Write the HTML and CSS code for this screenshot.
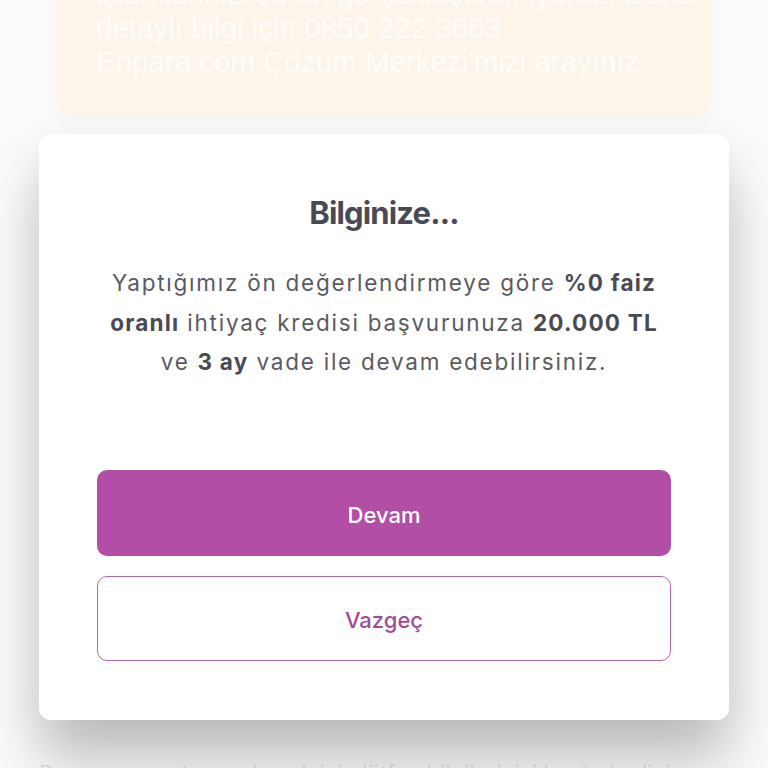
FILE: index.html
```html
<!DOCTYPE html>
<html lang="tr">
<head>
<meta charset="utf-8">
<link rel="stylesheet" href="styles.css">
</head>
<body>
<div class="page">
  <div class="notice">
    <p>işlemlerinizi şu an gerçekleştiremiyoruz. Daha</p>
    <p>detaylı bilgi için 0850 222 3663</p>
    <p>Enpara.com Çözüm Merkezi'mizi arayınız.</p>
  </div>
  <div class="modal">
    <h1 class="title">Bilginize...</h1>
    <p class="message">Yaptığımız ön değerlendirmeye göre <b>%0 faiz</b><br><b>oranlı</b> ihtiyaç kredisi başvurunuza <b>20.000 TL</b><br>ve <b>3 ay</b> vade ile devam edebilirsiniz.</p>
    <div class="actions">
      <button class="btn btn-primary">Devam</button>
      <button class="btn btn-outline">Vazgeç</button>
    </div>
  </div>
  <p class="below">Başvurunuzu tamamlamak için lütfen bilgilerinizi kontrol ediniz.</p>
</div>
</body>
</html>
```
FILE: styles.css
```css
html, body {
  margin: 0;
  padding: 0;
  background: #fbfbfb;
  overflow: hidden;
}
.page {
  width: 768px;
  height: 768px;
  overflow: hidden;
  font-family: "Inter", "Noto Sans", sans-serif;
}
.notice {
  margin: -23px 56px 0 56px;
  padding: 0 40px 0 40px;
  background: #fdf5e9;
  border-radius: 0 0 12px 12px;
  box-shadow: 0 6px 14px rgba(0,0,0,0.03);
  height: 138px;
  box-sizing: border-box;
}
.notice p {
  margin: 0;
  font-family: "Liberation Sans", Arial, sans-serif;
  font-size: 29.5px;
  line-height: 34px;
  color: rgba(255,255,255,0.85);
  white-space: nowrap;
}
.modal {
  margin: 19px 39px 0 39px;
  background: #ffffff;
  border-radius: 12px;
  padding: 59px 58px 59px 58px;
  box-shadow: 0 45px 60px rgba(0,0,0,0.22), 0 10px 40px rgba(0,0,0,0.06);
  position: relative;
  z-index: 1;
}
.title {
  margin: 0;
  text-align: center;
  font-size: 31px;
  line-height: 40px;
  font-weight: 700;
  letter-spacing: -0.85px;
  color: #4a4a55;
}
.message {
  margin: 30px -20px 0 -20px;
  text-align: center;
  font-size: 22.5px;
  line-height: 39.5px;
  color: #5a5a64;
  letter-spacing: 1.75px;
  white-space: nowrap;
}
.message b {
  font-weight: 700;
  color: #4a4a55;
  letter-spacing: 1.2px;
}
.actions {
  margin-top: 88px;
  display: flex;
  flex-direction: column;
  gap: 20px;
}
.btn {
  height: 86px;
  border-radius: 10px;
  font-family: "Inter", "Noto Sans", sans-serif;
  font-size: 22px;
  font-weight: 500;
  width: 100%;
  padding-top: 5px;
  cursor: pointer;
}
.btn-primary {
  background: #b24ea6;
  color: #ffffff;
  border: none;
}
.btn-outline {
  background: #ffffff;
  color: #a24a97;
  border: 1.5px solid #b468aa;
  height: 85px;
}
.below {
  margin: 40px 39px 0 39px;
  font-size: 22px;
  color: rgba(150,150,150,0.25);
  white-space: nowrap;
}
```
